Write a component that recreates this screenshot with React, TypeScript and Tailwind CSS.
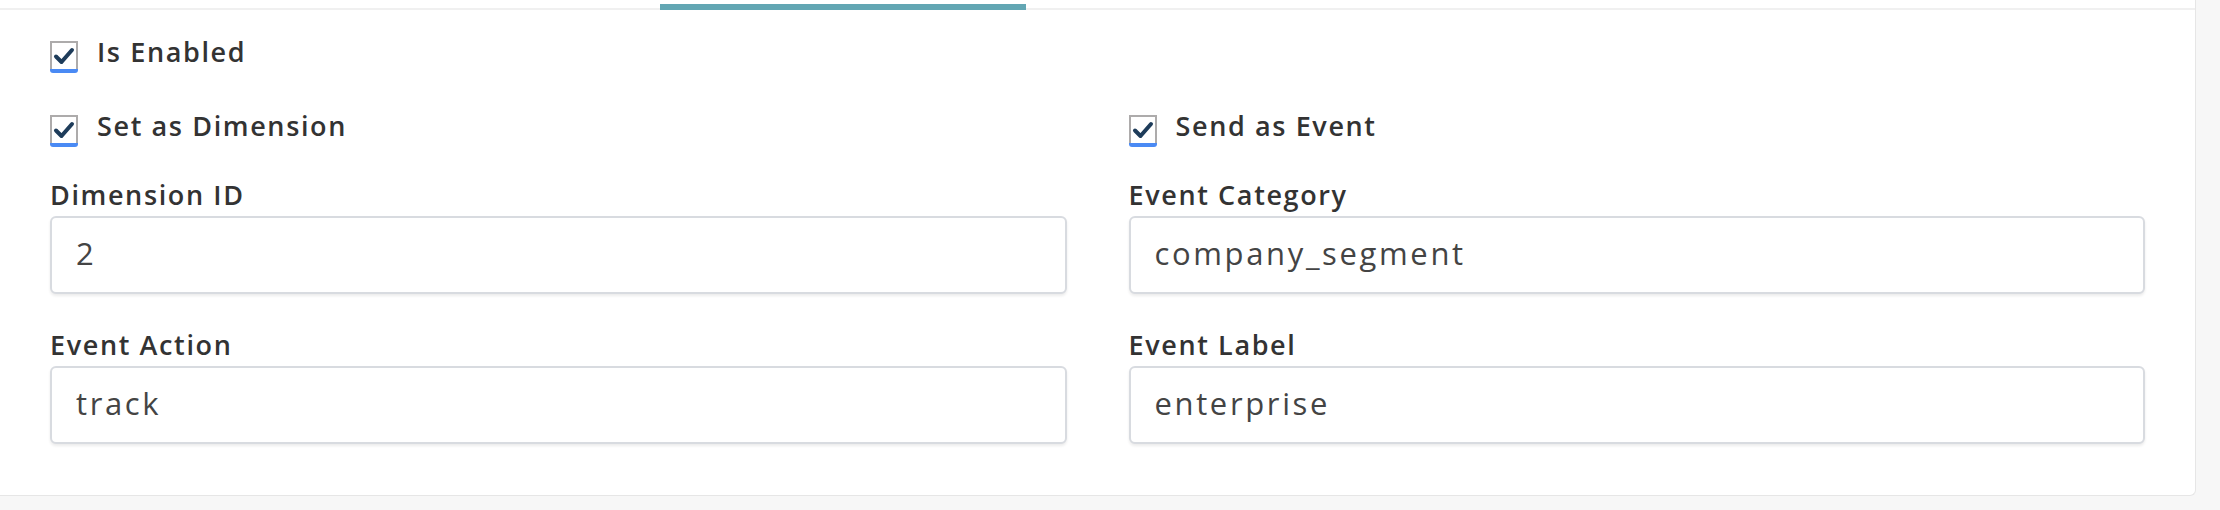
import React from 'react';

function Check({ label }: { label: string }) {
  return (
    <label className="flex h-[32px] items-start gap-[19px]">
      <span className="relative flex h-[32px] w-[28px] shrink-0 flex-col">
        <span className="flex h-[28px] w-[28px] items-center justify-center border-2 border-b-0 border-[#adabab] bg-white">
          <svg width="22" height="18" viewBox="0 0 22 18" fill="none">
            <path d="M3 9.5 L8.5 15 L19 3" stroke="#1e3c5a" strokeWidth="4" strokeLinecap="round" strokeLinejoin="round" />
          </svg>
        </span>
        <span className="h-[4px] w-[28px] rounded-b-[3px] bg-[#4a8af4]" />
      </span>
      <span className="text-[27px] font-semibold leading-[22px] tracking-[0.06em] text-[#333333]">{label}</span>
    </label>
  );
}

function Field({ label, value }: { label: string; value: string }) {
  return (
    <div className="flex flex-col">
      <div className="mb-[6px] h-[30px] text-[27px] font-semibold leading-[30px] tracking-[0.06em] text-[#333333]">{label}</div>
      <input
        readOnly
        value={value}
        className="h-[78px] w-full rounded-[6px] border-2 border-[#d8dbe0] bg-white px-[24px] pb-[4px] text-[31px] font-normal tracking-[0.085em] text-[#444444] shadow-[0_2px_3px_rgba(0,0,0,0.08)] outline-none"
        style={{ fontFamily: 'inherit' }}
      />
    </div>
  );
}

export default function App() {
  return (
    <div className="h-[510px] w-[2220px] bg-[#f7f7f7]" style={{ fontFamily: '"Open Sans", "DejaVu Sans", sans-serif' }}>
      <div className="h-[496px] w-[2196px] rounded-br-[6px] border-r border-b border-[#e6e6e6] bg-white">
        <div className="flex h-[10px] border-b-2 border-[#f0f0f0] pl-[660px]">
          <div className="mt-[4px] h-[6px] w-[366px] bg-[#62a6b3]" />
        </div>
        <div className="px-[50px] pt-[31px]">
          <Check label="Is Enabled" />
          <div className="mt-[42px] grid grid-cols-2 gap-x-[62px]">
            <Check label="Set as Dimension" />
            <Check label="Send as Event" />
          </div>
          <div className="mt-[33px] grid grid-cols-2 gap-x-[62px] gap-y-[36px]">
            <Field label="Dimension ID" value="2" />
            <Field label="Event Category" value="company_segment" />
            <Field label="Event Action" value="track" />
            <Field label="Event Label" value="enterprise" />
          </div>
        </div>
      </div>
    </div>
  );
}
